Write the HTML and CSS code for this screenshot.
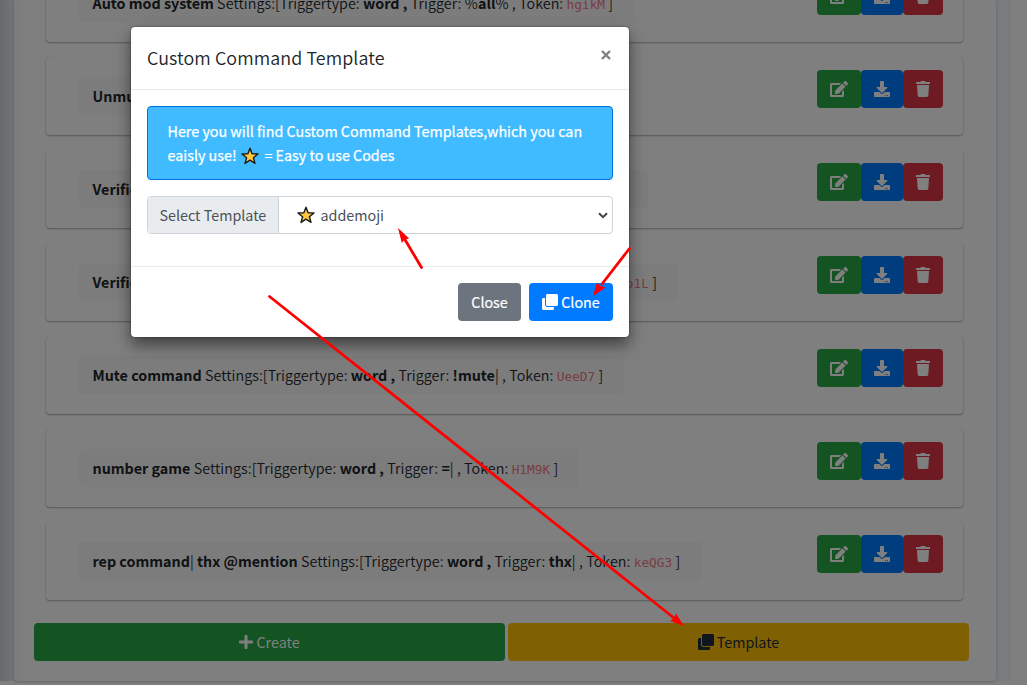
FILE: index.html
```html
<!DOCTYPE html>
<html lang="en">
<head>
<meta charset="utf-8">
<title>Custom Commands</title>
<link rel="stylesheet" href="styles.css">
</head>
<body>
<svg class="sprite" aria-hidden="true">
  <symbol id="edit" viewBox="0 0 576 512"><path d="M402.6 83.2l90.2 90.2c3.800 3.800 3.800 10 0 13.800L274.400 405.600l-92.800 10.300c-12.400 1.400-22.900-9.100-21.500-21.500l10.300-92.800L388.800 83.200c3.800-3.800 10-3.800 13.800 0zm162-22.900l-48.800-48.800c-15.200-15.200-39.900-15.200-55.200 0l-35.400 35.400c-3.800 3.800-3.800 10 0 13.800l90.200 90.2c3.800 3.800 10 3.800 13.800 0l35.400-35.400c15.200-15.300 15.200-40 0-55.200zM384 346.200V448H64V128h229.800c3.200 0 6.200-1.300 8.500-3.500l40-40c7.600-7.600 2.200-20.500-8.500-20.500H48C21.500 64 0 85.500 0 112v352c0 26.500 21.500 48 48 48h352c26.500 0 48-21.500 48-48V306.200c0-10.700-12.900-16-20.500-8.500l-40 40c-2.200 2.300-3.500 5.300-3.500 8.500z"/></symbol>
  <symbol id="download" viewBox="0 0 512 512"><path d="M216 0h80c13.300 0 24 10.700 24 24v168h87.700c17.800 0 26.700 21.500 14.100 34.100L269.700 378.300c-7.500 7.500-19.800 7.500-27.300 0L90.100 226.100c-12.600-12.600-3.700-34.100 14.100-34.100H192V24c0-13.300 10.700-24 24-24zm296 376v112c0 13.300-10.700 24-24 24H24c-13.300 0-24-10.700-24-24V376c0-13.300 10.700-24 24-24h146.700l49 49c20.100 20.100 52.500 20.100 72.600 0l49-49H488c13.300 0 24 10.700 24 24zm-124 88c0-11-9-20-20-20s-20 9-20 20 9 20 20 20 20-9 20-20zm64 0c0-11-9-20-20-20s-20 9-20 20 9 20 20 20 20-9 20-20z"/></symbol>
  <symbol id="trash" viewBox="0 0 448 512"><path d="M432 32H312l-9.400-18.700A24 24 0 0 0 281.100 0H166.800a23.720 23.720 0 0 0-21.400 13.300L136 32H16A16 16 0 0 0 0 48v32a16 16 0 0 0 16 16h416a16 16 0 0 0 16-16V48a16 16 0 0 0-16-16zM53.200 467a48 48 0 0 0 47.900 45h245.800a48 48 0 0 0 47.900-45L416 128H32z"/></symbol>
  <symbol id="clone" viewBox="0 0 512 512"><path d="M464 0c26.510 0 48 21.490 48 48v288c0 26.510-21.490 48-48 48H176c-26.510 0-48-21.490-48-48V48c0-26.510 21.490-48 48-48h288M176 416c-44.112 0-80-35.888-80-80V128H48c-26.510 0-48 21.490-48 48v288c0 26.510 21.490 48 48 48h288c26.510 0 48-21.490 48-48v-48H176z"/></symbol>
  <symbol id="plus" viewBox="0 0 448 512"><path d="M416 208H272V64c0-17.670-14.330-32-32-32h-32c-17.670 0-32 14.330-32 32v144H32c-17.670 0-32 14.330-32 32v32c0 17.670 14.330 32 32 32h144v144c0 17.670 14.330 32 32 32h32c17.670 0 32-14.330 32-32V304h144c17.670 0 32-14.330 32-32v-32c0-17.670-14.330-32-32-32z"/></symbol>
  <symbol id="star" viewBox="0 0 18 18"><path d="M9 1.200L11.100 6.700 17 7 12.400 10.700 14 16.400 9 13.200 4 16.400 5.600 10.700 1 7 6.900 6.700Z" fill="#ffc83d" stroke="#1b1b1b" stroke-width="1.400" stroke-linejoin="round"/></symbol>
</svg>

<div class="page">
  <main class="panel">
    <div class="list">
      <div class="row"><div class="chip chip-1"><b>Auto mod system</b> Settings:[Triggertype: <b>word ,</b> Trigger: %<b>all</b>% , Token: <code>hgikM</code> ]</div>
        <div class="actions"><span class="btn green edit"><svg><use href="#edit"/></svg></span><span class="btn blue down"><svg><use href="#download"/></svg></span><span class="btn red trash"><svg><use href="#trash"/></svg></span></div></div>
      <div class="row"><div class="chip chip-2"><b>Unmute</b></div>
        <div class="actions"><span class="btn green edit"><svg><use href="#edit"/></svg></span><span class="btn blue down"><svg><use href="#download"/></svg></span><span class="btn red trash"><svg><use href="#trash"/></svg></span></div></div>
      <div class="row"><div class="chip chip-3"><b>Verific</b></div>
        <div class="actions"><span class="btn green edit"><svg><use href="#edit"/></svg></span><span class="btn blue down"><svg><use href="#download"/></svg></span><span class="btn red trash"><svg><use href="#trash"/></svg></span></div></div>
      <div class="row"><div class="chip chip-4"><b>Verific</b><span><code>o1L</code> ]</span></div>
        <div class="actions"><span class="btn green edit"><svg><use href="#edit"/></svg></span><span class="btn blue down"><svg><use href="#download"/></svg></span><span class="btn red trash"><svg><use href="#trash"/></svg></span></div></div>
      <div class="row"><div class="chip chip-5"><b>Mute command</b> Settings:[Triggertype: <b>word ,</b> Trigger: <b>!mute</b>| , Token: <code>UeeD7</code> ]</div>
        <div class="actions"><span class="btn green edit"><svg><use href="#edit"/></svg></span><span class="btn blue down"><svg><use href="#download"/></svg></span><span class="btn red trash"><svg><use href="#trash"/></svg></span></div></div>
      <div class="row"><div class="chip chip-6"><b>number game</b> Settings:[Triggertype: <b>word ,</b> Trigger: <b>=</b>| , Token: <code>H1M9K</code> ]</div>
        <div class="actions"><span class="btn green edit"><svg><use href="#edit"/></svg></span><span class="btn blue down"><svg><use href="#download"/></svg></span><span class="btn red trash"><svg><use href="#trash"/></svg></span></div></div>
      <div class="row"><div class="chip chip-7"><b>rep command</b>| <b>thx @mention</b> Settings:[Triggertype: <b>word ,</b> Trigger: <b>thx</b>| , Token: <code>keQG3</code> ]</div>
        <div class="actions"><span class="btn green edit"><svg><use href="#edit"/></svg></span><span class="btn blue down"><svg><use href="#download"/></svg></span><span class="btn red trash"><svg><use href="#trash"/></svg></span></div></div>
    </div>
    <div class="bar">
      <span class="btn green create"><svg><use href="#plus"/></svg>Create</span>
      <span class="btn yellow template"><svg><use href="#clone"/></svg>Template</span>
    </div>
  </main>
</div>

<div class="backdrop">
  <section class="modal">
    <header class="modal-head"><h5>Custom Command Template</h5><svg class="x" viewBox="0 0 10 10"><path d="M1 1L9 9M9 1L1 9" stroke="#7f7f7f" stroke-width="2.300"/></svg></header>
    <div class="modal-body">
      <div class="alert">Here you will find Custom Command Templates,which you can<br>eaisly use! <svg class="star"><use href="#star"/></svg> = Easy to use Codes</div>
      <div class="group">
        <span class="prefix">Select Template</span>
        <div class="select"><svg class="star"><use href="#star"/></svg><span class="value">addemoji</span><svg class="caret" viewBox="0 0 10 7"><path d="M1 1.200L5 5.200L9 1.200" fill="none" stroke="#3c434a" stroke-width="2"/></svg></div>
      </div>
    </div>
    <footer class="modal-foot"><span class="btn gray">Close</span><span class="btn blue clone"><svg><use href="#clone"/></svg>Clone</span></footer>
  </section>
</div>

<svg class="arrows" viewBox="0 0 1027 685" fill="#f00" stroke="#f00">
  <path d="M421.500 267.500L404 238M629.500 248.500L602 284M269.500 296.500L674 618" stroke-width="2.800" stroke-linecap="round" fill="none"/>
  <path d="M398 228L409.200 238.500L404.500 239.500L401.800 243Z M593 296L597 282.500L600.500 286L605.500 287.500Z M684 626L670.200 621L674 618L676 613.500Z" stroke="none"/>
</svg>
</body>
</html>
```
FILE: styles.css
```css
* { box-sizing: border-box; }
body {
  margin: 0;
  width: 1027px;
  height: 685px;
  overflow: hidden;
  background: #fff;
  color: #212529;
  font: 400 14.320px/24px "Noto Sans CJK SC", "Noto Sans", sans-serif;
}
.sprite { position: absolute; width: 0; height: 0; }
.page {
  display: flex;
  width: 1011px;
  height: 681px;
  background: linear-gradient(90deg, #cfd1d5 0, #e6e8eb 12px, #f4f6f9 26px);
}
.panel {
  width: 982px;
  height: 681px;
  margin-left: 14px;
  padding: 0 27px 0 20px;
  background: linear-gradient(90deg, #f8f8f8, #fff 16px);
  border-radius: 0 0 4px 4px;
  box-shadow: 0 0 1px rgba(0,0,0,.13), 0 1px 3px rgba(0,0,0,.2);
}
.list {
  display: flex;
  flex-direction: column;
  gap: 15px;
  margin-top: -36px;
  padding: 0 6px 0 12px;
}
.row {
  display: flex;
  justify-content: space-between;
  align-items: flex-start;
  height: 78px;
  padding: 13px 20px 0 33px;
  border-radius: 4px;
  background: #fff;
  box-shadow: 0 0 1px rgba(0,0,0,.13), 0 1px 2px rgba(0,0,0,.32);
}
.chip {
  height: 38px;
  margin-top: 7px;
  padding: 7px 13px 7px 13.500px;
  border-radius: 4px;
  background: #f8f9fa;
  white-space: nowrap;
  font-weight: 350;
  letter-spacing: .06px;
}
.chip b { font-weight: 700; letter-spacing: 0; }
.chip-1 { width: 556px; }
.chip-2 { width: 520px; }
.chip-3 { width: 569px; }
.chip-4 { display: flex; justify-content: space-between; width: 598px; padding-right: 20px; }
.chip-5 { width: 545px; }
.chip-6 { width: 500px; }
.chip-7 { width: 623px; }
code { color: #f37884; font: 12.8px "DejaVu Sans Mono", monospace; letter-spacing: 0; }
.actions { display: flex; }
.btn {
  display: flex;
  align-items: center;
  justify-content: center;
  height: 38px;
  border-radius: 4px;
  color: #fff;
}
.btn svg { width: 16px; height: 16px; fill: currentColor; }
.green { background: #28a745; }
.blue { background: #007bff; }
.red { background: #dc3545; }
.yellow { background: #ffc107; color: #1f2d3d; }
.gray { width: 63px; background: #6c757d; }
.edit { width: 44px; }
.edit svg { width: 18px; }
.down { width: 42px; }
.trash { width: 40px; }
.trash svg { width: 14px; }
.bar { display: flex; gap: 3px; margin-top: 23px; }
.bar .btn { gap: 3px; }
.create { width: 471px; flex-shrink: 0; }
.create svg { width: 14px; }
.template { width: 461px; flex-shrink: 0; }
.backdrop {
  position: absolute;
  inset: 0;
  padding: 27px 0 0 131px;
  background: rgba(0,0,0,.5);
}
.modal {
  width: 498px;
  height: 310px;
  border-radius: 4px;
  background: #fff;
  box-shadow: 0 8px 16px rgba(0,0,0,.5), 0 0 2px rgba(0,0,0,.5);
}
.modal-head {
  display: flex;
  justify-content: space-between;
  height: 63px;
  padding: 15px 18px 16px 16px;
  border-bottom: 1px solid #e9ecef;
}
h5 { margin: 0; font-size: 17.9px; font-weight: 350; letter-spacing: .08px; line-height: 30px; }
.x { width: 10px; height: 10px; margin-top: 8px; }
.modal-body { height: 176px; padding: 16px; }
.alert {
  height: 74px;
  padding: 12px 19px 12px 19.500px;
  border: 1px solid #0071e3;
  border-radius: 4px;
  background: #40bbff;
  color: #fff;
  -webkit-text-stroke: .25px #fff;
  white-space: nowrap;
}
.star { width: 18px; height: 18px; vertical-align: -4px; }
.alert .star { margin: 0 2px 0 1.500px; }
.group { display: flex; height: 38px; margin-top: 16px; color: #495057; border: 1px solid #ced4da; border-radius: 4px; overflow: hidden; }
.prefix { width: 131px; padding: 6px 0 0 11.500px; background: #e9ecef; border-right: 1px solid #ced4da; white-space: nowrap; }
.select { display: flex; flex: 1; align-items: center; padding: 0 4px 0 18px; }
.value { flex: 1; padding-left: 5.500px; }
.caret { width: 10px; height: 7px; }
.modal-foot {
  display: flex;
  justify-content: flex-end;
  gap: 8px;
  padding: 16px;
  border-top: 1px solid #e9ecef;
}
.modal-foot .btn { -webkit-text-stroke: .2px #fff; }
.clone { width: 84px; gap: 3px; }
.arrows { position: absolute; left: 0; top: 0; width: 1027px; height: 685px; }
```
